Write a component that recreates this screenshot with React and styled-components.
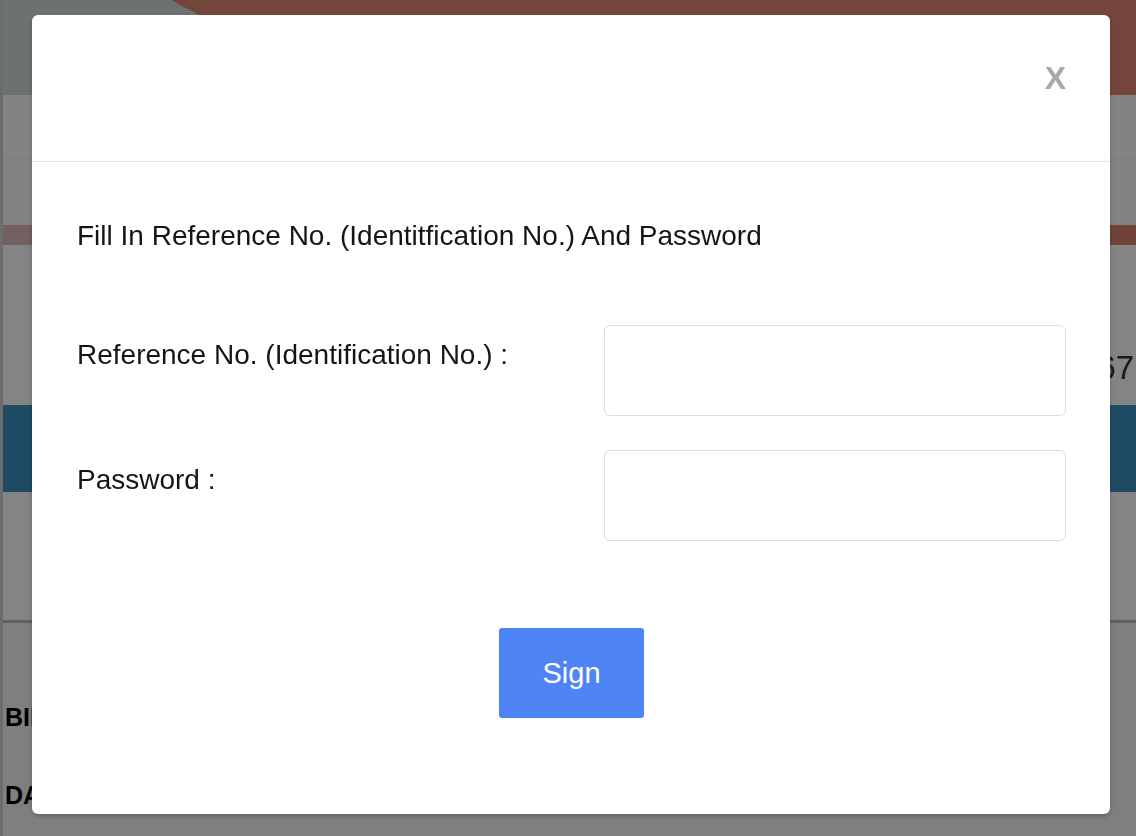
import React from "react";
import styled, { createGlobalStyle } from "styled-components";

const GlobalStyle = createGlobalStyle`
  html, body {
    margin: 0;
    padding: 0;
    height: 100%;
    overflow: hidden;
  }
  body {
    font-family: "Liberation Sans", Arial, sans-serif;
    background: #f4f4f4;
  }
`;

// page behind the dialog
const Page = styled.div`
  width: 100%;
  min-height: 836px;
  border-left: 3px solid #d0d0d0;
  box-sizing: border-box;
`;

const Banner = styled.div`
  height: 95px;
  background: linear-gradient(27.8deg, #cfdad3 0 26.5%, #df8471 26.5% 100%);
`;

const NavBand = styled.div`
  height: 62px;
  background: #fdfcfb;
  border-bottom: 1px solid #f2f0ee;
`;

const SubBand = styled.div`
  height: 67px;
  background: #fcfaf9;
`;

const Stripe = styled.div`
  height: 20px;
  background: linear-gradient(90deg, #dcb8b5 0 10%, #d9806c 40% 100%);
`;

const InfoBand = styled.div`
  height: 160px;
  box-sizing: border-box;
  background: #fdfdfd;
  display: flex;
  justify-content: flex-end;
  align-items: flex-end;
  padding: 0 2px 20px 0;
  font-size: 33px;
  line-height: 34px;
  color: #333;
`;

const BlueBand = styled.div`
  height: 87px;
  background: #3a8ebf;
`;

const LowerBand = styled.div`
  height: 128px;
  background: #fdfdfd;
  border-bottom: 3px solid #b8b8b8;
`;

const Details = styled.div`
  display: flex;
  flex-direction: column;
  gap: 49px;
  padding: 80px 0 0 2px;
  font-size: 25px;
  font-weight: bold;
  color: #000;
`;

const Backdrop = styled.div`
  position: fixed;
  inset: 0;
  background: rgba(0, 0, 0, 0.48);
`;

const Dialog = styled.div`
  position: fixed;
  top: 15px;
  left: 32px;
  width: 1078px;
  background: #fff;
  border-radius: 6px;
  box-shadow: 0 2px 4px rgba(0, 0, 0, 0.25);
  color: #151515;
`;

const Header = styled.div`
  height: 147px;
  display: flex;
  justify-content: flex-end;
  align-items: flex-start;
  padding: 45px 44px 0 0;
  box-sizing: border-box;
  border-bottom: 1px solid #e6e6e6;
`;

const Close = styled.button`
  border: 0;
  background: none;
  padding: 0;
  font-family: inherit;
  font-size: 32px;
  font-weight: bold;
  line-height: 36px;
  color: #a6a9a9;
  cursor: pointer;
`;

const Body = styled.div`
  padding: 59px 44px 96px 45px;
`;

const Intro = styled.p`
  margin: 0 0 74px;
  font-size: 28px;
  line-height: 30px;
`;

const Row = styled.div`
  display: grid;
  grid-template-columns: 1fr 462px;
  margin-bottom: ${(p) => p.$gap}px;
`;

const Label = styled.label`
  padding-top: 15px;
  font-size: 28px;
  line-height: 30px;
`;

const Field = styled.input`
  height: 91px;
  box-sizing: border-box;
  border: 1px solid #dcdcdc;
  border-radius: 6px;
  padding: 0 14px;
  font-size: 24px;
  outline: none;
`;

const Actions = styled.div`
  display: flex;
  justify-content: center;
`;

const SignButton = styled.button`
  width: 145px;
  height: 90px;
  border: 0;
  border-radius: 3px;
  background: #4f84f6;
  color: #fff;
  font-family: inherit;
  font-size: 29px;
  cursor: pointer;
`;

export default function App() {
  return (
    <>
      <GlobalStyle />
      <Page>
        <Banner />
        <NavBand />
        <SubBand />
        <Stripe />
        <InfoBand>4567</InfoBand>
        <BlueBand />
        <LowerBand />
        <Details>
          <span>BIRTH</span>
          <span>DATE</span>
        </Details>
      </Page>
      <Backdrop />
      <Dialog>
        <Header>
          <Close>X</Close>
        </Header>
        <Body>
          <Intro>Fill In Reference No. (Identitfication No.) And Password</Intro>
          <Row $gap={34}>
            <Label htmlFor="ref">Reference No. (Identification No.) :</Label>
            <Field id="ref" type="text" />
          </Row>
          <Row $gap={87}>
            <Label htmlFor="pwd">Password :</Label>
            <Field id="pwd" type="password" />
          </Row>
          <Actions>
            <SignButton>Sign</SignButton>
          </Actions>
        </Body>
      </Dialog>
    </>
  );
}
